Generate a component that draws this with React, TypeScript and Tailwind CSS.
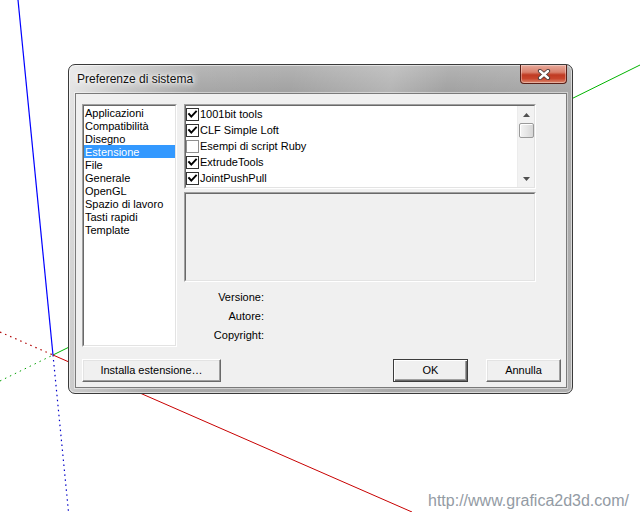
import React from "react";

const leftItems = [
  "Applicazioni",
  "Compatibilità",
  "Disegno",
  "Estensione",
  "File",
  "Generale",
  "OpenGL",
  "Spazio di lavoro",
  "Tasti rapidi",
  "Template",
];

const extItems: [string, boolean][] = [
  ["1001bit tools", true],
  ["CLF Simple Loft", true],
  ["Esempi di script Ruby", false],
  ["ExtrudeTools", true],
  ["JointPushPull", true],
  ["", true],
];

function Sunken({ className, innerClassName, children }: { className: string; innerClassName?: string; children?: React.ReactNode }) {
  return (
    <div className={`border border-t-[#a0a0a0] border-l-[#a0a0a0] border-r-white border-b-white ${className}`}>
      <div className={`h-full w-full border border-t-[#696969] border-l-[#696969] border-r-[#e3e3e3] border-b-[#e3e3e3] ${innerClassName ?? ""}`}>
        {children}
      </div>
    </div>
  );
}

function Check({ checked }: { checked: boolean }) {
  return (
    <div className={`w-[13px] h-[13px] shrink-0 bg-white border ${checked ? "border-[#333333]" : "border-[#8f8f8f]"}`}>
      {checked && (
        <svg width="11" height="11" viewBox="0 0 11 11">
          <path d="M2 5 L4.3 7.6 L9 2.6" fill="none" stroke="#000" strokeWidth="1.9" strokeLinecap="square" />
        </svg>
      )}
    </div>
  );
}

function Btn({ label, w, def }: { label: string; w: string; def?: boolean }) {
  return (
    <div
      className={`${w} h-[23px] flex items-center justify-center bg-[#f0f0f0] text-[11px] text-black ${
        def
          ? "border border-[#3c3c3c] shadow-[inset_1px_1px_0_#ffffff,inset_-1px_-1px_0_#696969,inset_-2px_-2px_0_#a0a0a0]"
          : "border border-t-white border-l-white border-r-[#696969] border-b-[#696969] shadow-[inset_-1px_-1px_0_#a0a0a0,inset_1px_1px_0_#e3e3e3]"
      }`}
    >
      {label}
    </div>
  );
}

export default function App() {
  return (
    <div className="relative w-[640px] h-[512px] bg-white overflow-hidden font-['Liberation_Sans',Arial,sans-serif]">
      <svg className="absolute inset-0" width="640" height="512" viewBox="0 0 640 512">
        <line x1="53" y1="355" x2="640" y2="65" stroke="#00b400" strokeWidth="1" />
        <line x1="0" y1="381" x2="53" y2="355" stroke="#00a000" strokeWidth="1" strokeDasharray="1.5 4" />
        <line x1="18" y1="0" x2="53" y2="355" stroke="#0000ff" strokeWidth="1.2" />
        <line x1="53" y1="355" x2="68.5" y2="512" stroke="#0000c8" strokeWidth="1.2" strokeDasharray="1.5 3.5" />
        <line x1="0" y1="332" x2="53" y2="355" stroke="#b00000" strokeWidth="1.2" strokeDasharray="1.5 4" />
        <line x1="53" y1="355" x2="412" y2="512" stroke="#c80000" strokeWidth="1" />
      </svg>

      {/* Dialog window */}
      <div className="absolute left-[68px] top-[64px] w-[505px] h-[330px] rounded-[7px] border border-[#3a3a3a] flex flex-col pl-[6px] pr-[5px] pb-[5px] shadow-[inset_0_0_0_1px_rgba(255,255,255,0.55)] [background-image:linear-gradient(100deg,rgba(255,255,255,0.75)_0%,rgba(255,255,255,0.45)_9%,rgba(255,255,255,0.05)_24%,rgba(255,255,255,0)_40%,rgba(255,255,255,0.2)_58%,rgba(255,255,255,0)_68%,rgba(255,255,255,0.08)_90%),linear-gradient(180deg,#b4b4b4_0%,#a2a2a2_8%,#a9a9a9_100%)]">
        {/* Title bar */}
        <div className="relative h-[28px] flex items-center shrink-0">
          <span className="ml-[2px] text-[12px] text-[#111] [text-shadow:0_0_6px_#ffffff,0_0_10px_#ffffff,0_0_3px_#ffffff]">
            Preferenze di sistema
          </span>
          <div className="absolute top-0 right-0 w-[47px] h-[19px] rounded-b-[4px] border border-t-0 border-[#5a2018] flex items-center justify-center shadow-[inset_0_0_0_1px_rgba(255,255,255,0.35)] [background-image:linear-gradient(180deg,#e8aa9c_0%,#d9806c_40%,#c03a22_55%,#c8452c_75%,#dc8a70_100%)]">
            <svg width="14" height="11" viewBox="0 0 14 11">
              <path d="M3 2 L11 9 M11 2 L3 9" stroke="#4a3a3a" strokeWidth="4.2" strokeLinecap="round" />
              <path d="M3 2 L11 9 M11 2 L3 9" stroke="#ffffff" strokeWidth="2.4" strokeLinecap="round" />
            </svg>
          </div>
        </div>

        {/* Client area */}
        <div className="flex-1 border border-[#7a7a7a] bg-[#f0f0f0] flex flex-col pt-[10px] pl-[6px] pr-[5px] pb-[5px] shadow-[0_0_0_1px_rgba(255,255,255,0.45)]">
          <div className="flex gap-[7px] h-[243px]">
            {/* Left list */}
            <Sunken className="w-[95px] h-[243px]" innerClassName="bg-white">
              <div className="flex flex-col">
                {leftItems.map((it) => (
                  <div
                    key={it}
                    className={`h-[13px] leading-[14px] text-[11px] pl-[1px] whitespace-nowrap ${
                      it === "Estensione" ? "bg-[#3399ff] text-white" : "text-black"
                    }`}
                  >
                    {it}
                  </div>
                ))}
              </div>
            </Sunken>

            {/* Right column */}
            <div className="w-[352px] flex flex-col">
              <Sunken className="h-[85px]" innerClassName="bg-white flex overflow-hidden">
                <div className="flex-1 flex flex-col overflow-hidden">
                  {extItems.map(([name, c], i) => (
                    <div key={i} className="h-[16px] shrink-0 flex items-center gap-[1px] text-[11px] text-black whitespace-nowrap">
                      <Check checked={c} />
                      {name && <span className="leading-[13px]">{name}</span>}
                    </div>
                  ))}
                </div>
                {/* Scrollbar */}
                <div className="w-[17px] h-full bg-[#f2f2f2] border-l border-[#ececec] flex flex-col items-center">
                  <div className="h-[17px] w-full flex items-center justify-center">
                    <svg width="7" height="4" viewBox="0 0 7 4">
                      <path d="M0 4 L3.5 0 L7 4 Z" fill="#505050" />
                    </svg>
                  </div>
                  <div className="w-[15px] h-[15px] rounded-[2px] border border-[#9a9a9a] [background-image:linear-gradient(90deg,#f4f4f4,#e6e6e6_50%,#d6d6d6)] shadow-[inset_1px_1px_0_#ffffff]" />
                  <div className="flex-1" />
                  <div className="h-[17px] w-full flex items-center justify-center">
                    <svg width="7" height="4" viewBox="0 0 7 4">
                      <path d="M0 0 L7 0 L3.5 4 Z" fill="#505050" />
                    </svg>
                  </div>
                </div>
              </Sunken>

              <Sunken className="h-[90px] mt-[3px]" innerClassName="bg-[#f0f0f0]" />

              <div className="mt-[6px] flex flex-col">
                {["Versione:", "Autore:", "Copyright:"].map((l) => (
                  <div key={l} className="h-[19px] w-[80px] flex items-center justify-end text-[11px] text-black">
                    {l}
                  </div>
                ))}
              </div>
            </div>
          </div>

          {/* Buttons */}
          <div className="mt-[12px] flex items-center">
            <Btn label="Installa estensione…" w="w-[139px]" />
            <div className="flex-1" />
            <Btn label="OK" w="w-[75px]" def />
            <div className="w-[18px]" />
            <Btn label="Annulla" w="w-[75px]" />
          </div>
        </div>
      </div>

      <div className="absolute left-[428px] top-[492px] text-[16px] leading-[18px] text-[#939ba4]">
        http://www.grafica2d3d.com/
      </div>
    </div>
  );
}
